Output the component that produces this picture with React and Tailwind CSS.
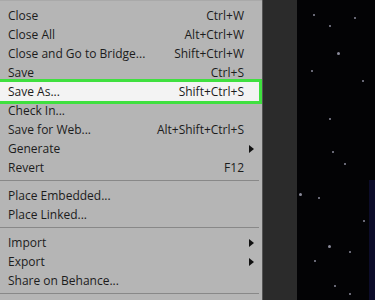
import React from 'react'

const font = { fontFamily: '"Segoe UI", "Open Sans", "Noto Sans", sans-serif' }

const groups = [
  [
    { label: 'Close', shortcut: 'Ctrl+W' },
    { label: 'Close All', shortcut: 'Alt+Ctrl+W' },
    { label: 'Close and Go to Bridge...', shortcut: 'Shift+Ctrl+W' },
    { label: 'Save', shortcut: 'Ctrl+S' },
    { label: 'Save As...', shortcut: 'Shift+Ctrl+S', active: true },
    { label: 'Check In...' },
    { label: 'Save for Web...', shortcut: 'Alt+Shift+Ctrl+S' },
    { label: 'Generate', sub: true },
    { label: 'Revert', shortcut: 'F12' }
  ],
  [
    { label: 'Place Embedded...' },
    { label: 'Place Linked...' }
  ],
  [
    { label: 'Import', sub: true },
    { label: 'Export', sub: true },
    { label: 'Share on Behance...' }
  ]
]

// scattered stars on the canvas
const stars = [
  [314, 14, 1], [330, 25, 1], [355, 17, 1], [338, 52, 2], [312, 70, 1], [363, 80, 1],
  [330, 118, 1], [345, 163, 1], [333, 151, 1], [300, 193, 2], [319, 197, 1], [364, 220, 1],
  [329, 245, 2], [350, 251, 1], [315, 260, 1], [370, 275, 2], [335, 285, 1], [350, 293, 1]
]

const Arrow = () => (
  <svg width="5" height="8" viewBox="0 0 5 8" className="absolute right-[8px] top-[6px]">
    <path d="M0 0 L5 4 L0 8 Z" fill="#111" />
  </svg>
)

const Item = ({ item }) => (
  <div
    className={`relative flex items-center justify-between h-[19px] text-[12px] text-[#1c1c1c] ${
      item.active
        ? 'bg-[#f3f3f3] outline-[3px] outline-solid outline-[#3fe03f] -ml-[4px] mr-[3px] pl-[12px] pr-[15px] z-10'
        : 'pl-[8px] pr-[18px]'
    }`}
  >
    <span>{item.label}</span>
    {item.shortcut && <span>{item.shortcut}</span>}
    {item.sub && <Arrow />}
  </div>
)

export default function App() {
  return (
    <div className="flex w-[375px] h-[300px] overflow-hidden bg-black" style={font}>
      <div className="w-[262px] shrink-0 bg-[#b5b5b5] pt-[5px] border-t border-[#a9a9a9]">
        {groups.map((group, i) => (
          <div key={i}>
            {i > 0 && <div className="h-px bg-[#888] mt-[3px] mb-[5px] mr-[3px]" />}
            {group.map((item) => (
              <Item key={item.label} item={item} />
            ))}
          </div>
        ))}
        <div className="h-px bg-[#888] mt-[3px] mr-[3px]" />
      </div>
      <div className="w-px bg-[#555]" />
      <div className="w-[34px] shrink-0 bg-[#2b2b2b]" />
      <div className="relative flex-1 bg-[#030305]">
        {stars.map(([x, y, s], i) => (
          <span
            key={i}
            className="absolute rounded-full bg-[#8a8a9a]"
            style={{ left: x - 298, top: y, width: s + 1, height: s + 1 }}
          />
        ))}
        <div className="absolute right-0 top-[180px] w-[6px] h-[120px] bg-[#0c0c2a]" />
      </div>
    </div>
  )
}
